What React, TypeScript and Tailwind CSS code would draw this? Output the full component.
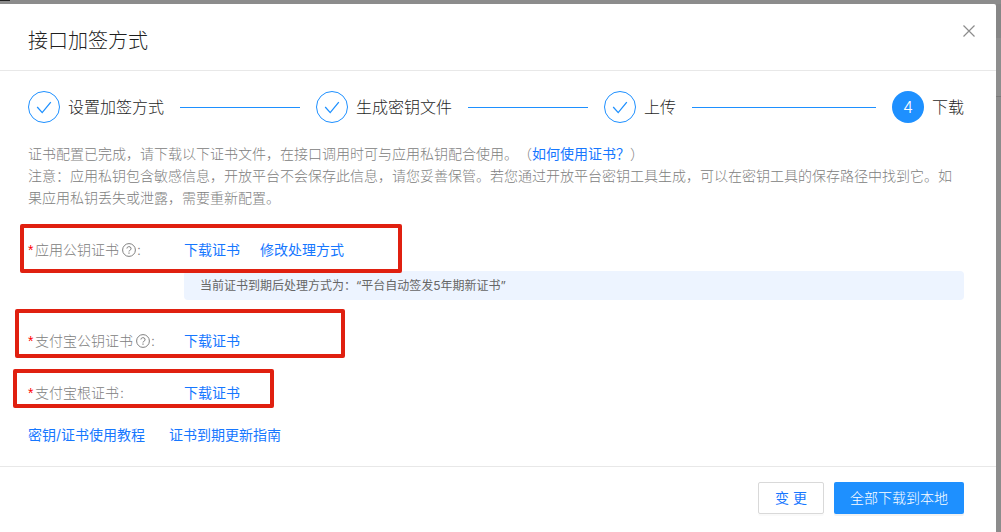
import type { ReactNode } from "react";

const STEPS = [
  { title: "设置加签方式", done: true },
  { title: "生成密钥文件", done: true },
  { title: "上传", done: true },
  { title: "下载", done: false },
];

function CheckIcon() {
  return (
    <svg width="16" height="16" viewBox="0 0 16 16" fill="none" stroke="currentColor" strokeWidth="1.3" aria-hidden="true">
      <path d="M1.2 8 6.2 13.6 14.8 3.2" />
    </svg>
  );
}

function HelpIcon() {
  return (
    <svg width="14" height="14" viewBox="0 0 14 14" fill="none" stroke="currentColor" aria-hidden="true">
      <circle cx="7" cy="7" r="6.4" />
      <path d="M4.9 5.5a2.1 1.9 0 1 1 2.9 1.8c-.6.3-.8.6-.8 1.2" />
      <path d="M7 9.6v1.2" strokeWidth="1.2" />
    </svg>
  );
}

function CloseIcon() {
  return (
    <svg width="12" height="12" viewBox="0 0 12 12" fill="none" stroke="currentColor" strokeWidth="1.2" aria-hidden="true">
      <path d="M.5.5l11 11M11.5.5l-11 11" />
    </svg>
  );
}

function TextLink({ children }: { children: ReactNode }) {
  return (
    <a href="#" className="font-normal text-[#1677ff] hover:underline">
      {children}
    </a>
  );
}

function Steps() {
  return (
    <ol className="flex text-base text-[#1f1f1f]">
      {STEPS.map((step, i) => {
        const last = i === STEPS.length - 1;
        return (
          <li key={step.title} className={last ? "flex items-center" : "flex flex-1 items-center pr-4"}>
            <span
              className={
                step.done
                  ? "flex size-8 shrink-0 items-center justify-center rounded-full border border-[#1e90ff] text-[#1e90ff]"
                  : "flex size-8 shrink-0 items-center justify-center rounded-full bg-[#1e90ff] text-white"
              }
            >
              {step.done ? <CheckIcon /> : i + 1}
            </span>
            <span className="ml-2 whitespace-nowrap">{step.title}</span>
            {!last && <span className="ml-4 h-px flex-1 bg-[#1e90ff]" />}
          </li>
        );
      })}
    </ol>
  );
}

type CertRowProps = {
  label: string;
  help?: boolean;
  className: string;
  mark: string;
  children: ReactNode;
};

function CertRow({ label, help, className, mark, children }: CertRowProps) {
  return (
    <div className={`relative flex h-8 items-center ${className}`}>
      <div className="flex w-[156px] shrink-0 items-center text-[#808080]">
        <span className="w-[7px] font-['Liberation_Sans',sans-serif] text-[#f00]">*</span>
        <span>{label}</span>
        {help && (
          <button type="button" aria-label={`${label}说明`} className="ml-[3px]">
            <HelpIcon />
          </button>
        )}
        <span className="ml-px">:</span>
      </div>
      <div className="flex gap-5">{children}</div>
      {/* red marker frame */}
      <span className={`pointer-events-none absolute rounded-xs border-4 border-[#e02010] ${mark}`} />
    </div>
  );
}

export default function App() {
  return (
    <div className="flex min-h-screen flex-col bg-[#8c8c8c] font-['Inter','Noto_Sans_CJK_SC',sans-serif] text-sm leading-[22px] font-light [text-spacing-trim:space-all]">
      {/* page behind the mask */}
      <div className="h-1">
        <div className="h-px w-[10px] bg-[#222]" />
      </div>

      <div className="flex flex-1">
        <div role="dialog" aria-labelledby="dialog-title" className="min-w-0 flex-1 rounded-tr-xs bg-white">
          <header className="flex items-start justify-between border-b border-[#e8e8e8] pt-[21px] pr-[21px] pb-[15px] pl-7">
            <h1 id="dialog-title" className="pt-[2px] text-xl leading-7 font-light text-[#1f1f1f]">
              接口加签方式
            </h1>
            <button type="button" aria-label="关闭" className="text-[#8c8c8c]">
              <CloseIcon />
            </button>
          </header>

          <main className="pt-5 pr-8 pb-5 pl-7">
            <Steps />

            <div className="mt-5 text-[#808080]">
              <p>
                证书配置已完成，请下载以下证书文件，在接口调用时可与应用私钥配合使用。（
                <TextLink>如何使用证书？</TextLink>）
              </p>
              <p>
                注意：应用私钥包含敏感信息，开放平台不会保存此信息，请您妥善保管。若您通过开放平台密钥工具生成，可以在密钥工具的保存路径中找到它。如果应用私钥丢失或泄露，需要重新配置。
              </p>
            </div>

            <CertRow label="应用公钥证书" help className="mt-[25px]" mark="-top-[10px] -left-2 h-[49px] w-[382px]">
              <TextLink>下载证书</TextLink>
              <TextLink>修改处理方式</TextLink>
            </CertRow>
            <p className="mt-[5px] ml-[156px] rounded bg-[#edf4ff] px-4 pt-1 pb-[3px] text-xs leading-[22px] font-normal text-[#666]">
              当前证书到期后处理方式为：“平台自动签发5年期新证书”
            </p>

            <CertRow label="支付宝公钥证书" help className="mt-[25px]" mark="-top-4 -left-[13px] h-[49px] w-[330px]">
              <TextLink>下载证书</TextLink>
            </CertRow>
            <CertRow label="支付宝根证书" className="mt-5" mark="-top-2 -left-[15px] h-[39px] w-[261px]">
              <TextLink>下载证书</TextLink>
            </CertRow>

            <div className="mt-[15px] flex gap-6">
              <TextLink>密钥/证书使用教程</TextLink>
              <TextLink>证书到期更新指南</TextLink>
            </div>
          </main>

          <footer className="flex justify-end gap-[10px] border-t border-[#e8e8e8] py-[15px] pr-8">
            <button
              type="button"
              className="h-8 rounded-xs border border-[#d9d9d9] px-4 font-normal whitespace-pre text-[#1677ff] shadow-[0_2px_0_rgba(0,0,0,0.02)]"
            >
              变 更
            </button>
            <button type="button" className="h-8 rounded-xs bg-[#1e90ff] px-4 text-white shadow-[0_2px_0_rgba(0,0,0,0.05)]">
              全部下载到本地
            </button>
          </footer>
        </div>

        <div className="w-[5px]">
          <div className="h-[34px] bg-[#868686]" />
          <div className="h-[59px] border-b border-[#7a7a7a] bg-[#8e8e8e]" />
        </div>
      </div>
    </div>
  );
}
